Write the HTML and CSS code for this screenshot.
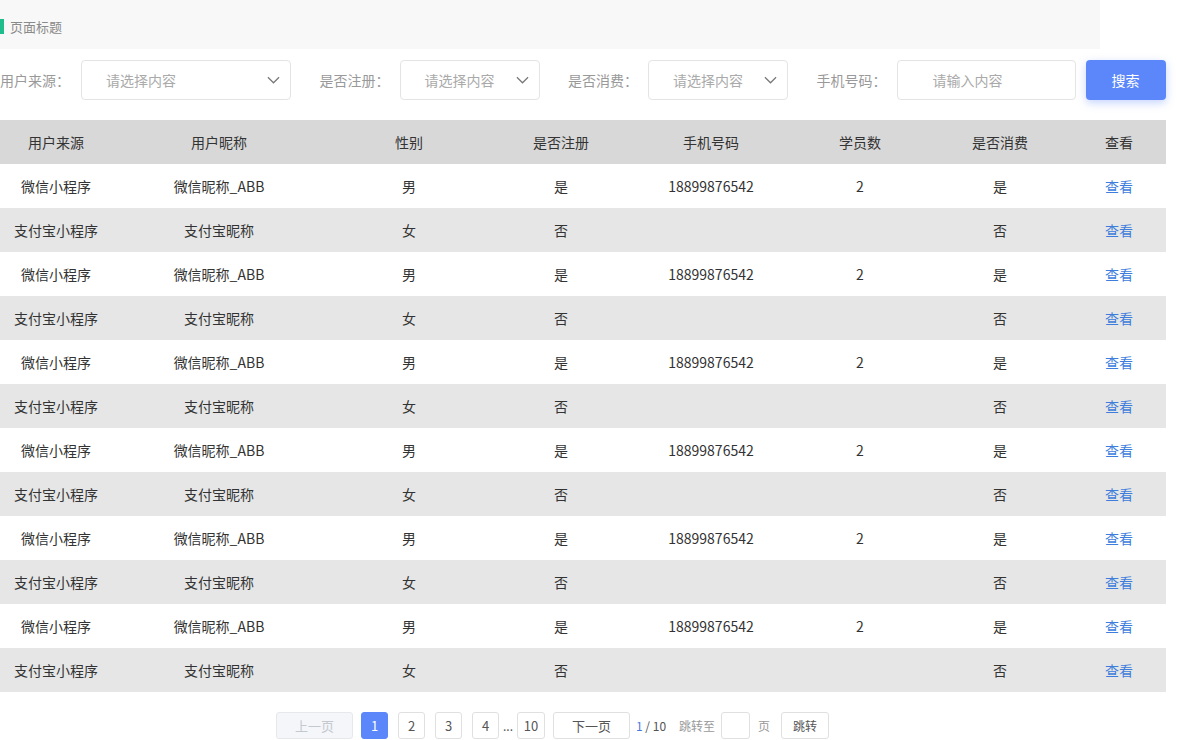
FILE: index.html
```html
<!DOCTYPE html>
<html lang="zh">
<head>
<meta charset="utf-8">
<title>页面标题</title>
<link rel="stylesheet" href="styles.css">
</head>
<body>
<div class="page">
  <div class="title-bar"><span class="title-mark"></span><span class="title-text">页面标题</span></div>

  <div class="filters">
    <span class="label">用户来源：</span>
    <div class="select w210"><span>请选择内容</span><svg class="chev" viewBox="0 0 14 8" width="13" height="8"><path d="M1 1l6 6 6-6" fill="none" stroke="#777" stroke-width="1.3"/></svg></div>
    <span class="label gap">是否注册：</span>
    <div class="select w140"><span>请选择内容</span><svg class="chev" viewBox="0 0 14 8" width="13" height="8"><path d="M1 1l6 6 6-6" fill="none" stroke="#777" stroke-width="1.3"/></svg></div>
    <span class="label gap">是否消费：</span>
    <div class="select w140"><span>请选择内容</span><svg class="chev" viewBox="0 0 14 8" width="13" height="8"><path d="M1 1l6 6 6-6" fill="none" stroke="#777" stroke-width="1.3"/></svg></div>
    <span class="label gap">手机号码：</span>
    <div class="input"><span>请输入内容</span></div>
    <button class="search">搜索</button>
  </div>

  <table class="grid">
    <colgroup>
      <col style="width:112px"><col style="width:214px"><col style="width:166px"><col style="width:138px"><col style="width:162px"><col style="width:136px"><col style="width:144px"><col style="width:94px">
    </colgroup>
    <thead>
      <tr><th>用户来源</th><th>用户昵称</th><th>性别</th><th>是否注册</th><th>手机号码</th><th>学员数</th><th>是否消费</th><th>查看</th></tr>
    </thead>
    <tbody>
      <tr><td>微信小程序</td><td>微信昵称_ABB</td><td>男</td><td>是</td><td>18899876542</td><td>2</td><td>是</td><td><a class="view">查看</a></td></tr>
      <tr class="alt"><td>支付宝小程序</td><td>支付宝昵称</td><td>女</td><td>否</td><td></td><td></td><td>否</td><td><a class="view">查看</a></td></tr>
      <tr><td>微信小程序</td><td>微信昵称_ABB</td><td>男</td><td>是</td><td>18899876542</td><td>2</td><td>是</td><td><a class="view">查看</a></td></tr>
      <tr class="alt"><td>支付宝小程序</td><td>支付宝昵称</td><td>女</td><td>否</td><td></td><td></td><td>否</td><td><a class="view">查看</a></td></tr>
      <tr><td>微信小程序</td><td>微信昵称_ABB</td><td>男</td><td>是</td><td>18899876542</td><td>2</td><td>是</td><td><a class="view">查看</a></td></tr>
      <tr class="alt"><td>支付宝小程序</td><td>支付宝昵称</td><td>女</td><td>否</td><td></td><td></td><td>否</td><td><a class="view">查看</a></td></tr>
      <tr><td>微信小程序</td><td>微信昵称_ABB</td><td>男</td><td>是</td><td>18899876542</td><td>2</td><td>是</td><td><a class="view">查看</a></td></tr>
      <tr class="alt"><td>支付宝小程序</td><td>支付宝昵称</td><td>女</td><td>否</td><td></td><td></td><td>否</td><td><a class="view">查看</a></td></tr>
      <tr><td>微信小程序</td><td>微信昵称_ABB</td><td>男</td><td>是</td><td>18899876542</td><td>2</td><td>是</td><td><a class="view">查看</a></td></tr>
      <tr class="alt"><td>支付宝小程序</td><td>支付宝昵称</td><td>女</td><td>否</td><td></td><td></td><td>否</td><td><a class="view">查看</a></td></tr>
      <tr><td>微信小程序</td><td>微信昵称_ABB</td><td>男</td><td>是</td><td>18899876542</td><td>2</td><td>是</td><td><a class="view">查看</a></td></tr>
      <tr class="alt"><td>支付宝小程序</td><td>支付宝昵称</td><td>女</td><td>否</td><td></td><td></td><td>否</td><td><a class="view">查看</a></td></tr>
    </tbody>
  </table>

  <div class="pager">
    <span class="pbtn wide disabled">上一页</span>
    <span class="pbtn num active">1</span>
    <span class="pbtn num">2</span>
    <span class="pbtn num">3</span>
    <span class="pbtn num">4</span>
    <span class="dots">...</span>
    <span class="pbtn num ten">10</span>
    <span class="pbtn wide next">下一页</span>
    <span class="count"><em>1</em> / 10</span>
    <span class="jump-label">跳转至</span>
    <span class="pbtn jump-input"></span>
    <span class="jump-label">页</span>
    <span class="pbtn go">跳转</span>
  </div>
</div>
</body>
</html>
```

FILE: styles.css
```css
* { box-sizing: border-box; }
body {
  margin: 0;
  background: #fff;
  font-family: "Noto Sans CJK SC", "Noto Sans", sans-serif;
  color: #333;
}
.page { width: 1177px; }

.title-bar {
  width: 1100px;
  height: 49px;
  background: #f8f8f8;
  display: flex;
  align-items: center;
  padding-top: 4px;
}
.title-mark {
  width: 4px;
  height: 15px;
  background: #1fbd8c;
  margin-right: 6px;
}
.title-text { font-size: 13px; color: #8a8a8a; }

.filters {
  display: flex;
  align-items: center;
  height: 40px;
  margin-top: 11px;
}
.label { font-size: 14px; color: #999; width: 81px; white-space: nowrap; }
.label.gap { margin-left: 28.5px; width: 80px; }
.select, .input {
  height: 40px;
  border: 1px solid #e4e4e4;
  border-radius: 4px;
  display: flex;
  align-items: center;
  justify-content: space-between;
  padding: 0 10px 0 24px;
  font-size: 14px;
  color: #aaa;
}
.w210 { width: 210px; }
.w140 { width: 140px; }
.input { width: 179px; padding-left: 35px; }
.chev { flex: none; }
.search {
  margin-left: 10px;
  width: 80px;
  height: 40px;
  border: none;
  border-radius: 4px;
  background: #5b87fb;
  color: #fff;
  font-family: inherit;
  font-size: 14px;
  box-shadow: 0 3px 8px rgba(91, 135, 251, 0.35);
}

.grid {
  margin-top: 20px;
  width: 1166px;
  border-collapse: collapse;
  table-layout: fixed;
  font-size: 14px;
}
.grid th {
  height: 44px;
  background: #d8d8d8;
  font-weight: normal;
  color: #333;
  padding: 0;
}
.grid td {
  height: 44px;
  text-align: center;
  padding: 0;
  color: #333;
}
.grid tr.alt td { background: #e6e6e6; }
.view { color: #3d7ddc; }

.pager {
  display: flex;
  align-items: center;
  margin-top: 20px;
  padding-left: 276px;
  font-size: 13px;
}
.pbtn {
  height: 27px;
  border: 1px solid #e0e0e0;
  border-radius: 3px;
  display: flex;
  align-items: center;
  justify-content: center;
  color: #555;
  background: #fff;
}
.wide { width: 77px; }
.num { width: 27px; margin-left: 10px; }
.disabled { background: #f4f6f9; color: #c4c8cf; border-color: #e6e8ec; }
.active { background: #5b87fb; border-color: #5b87fb; color: #fff; margin-left: 8px; }
.dots { width: 18px; text-align: center; font-size: 12px; color: #555; }
.num.ten { width: 28px; margin-left: 0; }
.next { margin-left: 8px; }
.count { margin-left: 6px; font-size: 12px; color: #555; }
.count em { font-style: normal; color: #4a7ddb; }
.jump-label { font-size: 12px; color: #999; margin-left: 13px; }
.jump-input { width: 29px; margin-left: 6px; }
.jump-input + .jump-label { margin-left: 8px; }
.go { width: 48px; margin-left: 11px; font-size: 12px; }
```
